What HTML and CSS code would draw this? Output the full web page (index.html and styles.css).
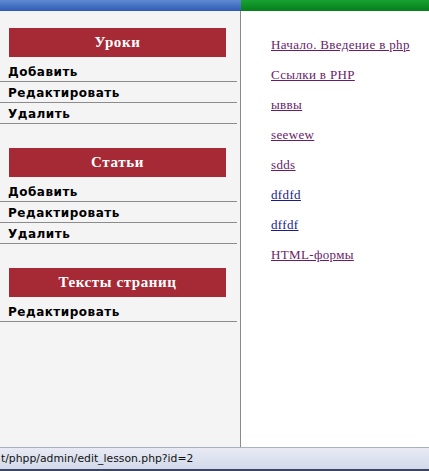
FILE: index.html
```html
<!DOCTYPE html>
<html>
<head>
<meta charset="utf-8">
<link rel="stylesheet" href="styles.css">
</head>
<body>
<div class="page">
  <div class="topbar">
    <div class="top-left"></div>
    <div class="top-right"></div>
  </div>
  <div class="main">
    <div class="sidebar">
      <div class="section">
        <div class="sec-title">Уроки</div>
        <a class="item" href="#">Добавить</a>
        <a class="item" href="#">Редактировать</a>
        <a class="item" href="#">Удалить</a>
      </div>
      <div class="section">
        <div class="sec-title">Статьи</div>
        <a class="item" href="#">Добавить</a>
        <a class="item" href="#">Редактировать</a>
        <a class="item" href="#">Удалить</a>
      </div>
      <div class="section">
        <div class="sec-title">Тексты страниц</div>
        <a class="item" href="#">Редактировать</a>
      </div>
    </div>
    <div class="content">
      <a class="link visited" href="#">Начало. Введение в php</a>
      <a class="link visited" href="#">Ссылки в PHP</a>
      <a class="link visited" href="#">ыввы</a>
      <a class="link visited" href="#">seewew</a>
      <a class="link visited" href="#">sdds</a>
      <a class="link fresh" href="#">dfdfd</a>
      <a class="link fresh" href="#">dffdf</a>
      <a class="link visited" href="#">HTML-формы</a>
    </div>
  </div>
  <div class="status">t/phpp/admin/edit_lesson.php?id=2</div>
  <div class="taskbar"></div>
</div>
</body>
</html>
```
FILE: styles.css
```css
html, body {
  margin: 0;
  padding: 0;
  background: #ffffff;
}
.page {
  width: 429px;
  height: 471px;
  display: flex;
  flex-direction: column;
  overflow: hidden;
}
.topbar {
  height: 11px;
  display: flex;
  flex: none;
}
.top-left {
  width: 241px;
  background: linear-gradient(#5f8ad2, #2f5cb4);
}
.top-right {
  flex: 1;
  background: linear-gradient(#19a232, #067e1c);
}
.main {
  flex: 1;
  display: flex;
  min-height: 0;
}
.sidebar {
  width: 241px;
  flex: none;
  background: #f4f4f4;
  border-right: 1px solid #8a8a8a;
  padding-top: 17px;
  box-sizing: border-box;
}
.section {
  display: flex;
  flex-direction: column;
  margin-bottom: 24px;
}
.sec-title {
  margin-left: 9px;
  width: 217px;
  height: 29px;
  background: #a52a36;
  color: #ffffff;
  font-family: "Liberation Serif", serif;
  font-weight: bold;
  font-size: 15px;
  letter-spacing: 0.6px;
  display: flex;
  align-items: center;
  justify-content: center;
  margin-bottom: 4px;
}
.item {
  width: 229px;
  height: 20px;
  border-bottom: 1px solid #8c8c8c;
  padding-left: 8px;
  color: #000000;
  text-decoration: none;
  font-family: "DejaVu Sans", sans-serif;
  font-weight: bold;
  font-size: 12px;
  letter-spacing: 0.5px;
  line-height: 22px;
}
.content {
  flex: 1;
  padding-top: 19px;
  padding-left: 30px;
  display: flex;
  flex-direction: column;
  align-items: flex-start;
}
.link {
  font-family: "Liberation Serif", serif;
  font-size: 13px;
  letter-spacing: 0.35px;
  line-height: 30px;
  height: 30px;
  text-decoration: underline;
}
.visited { color: #6a1b6a; }
.fresh { color: #1b1b8a; }
.status {
  height: 22px;
  flex: none;
  box-sizing: border-box;
  border-top: 1px solid #a8b0c4;
  background: linear-gradient(#e8ebf4, #d3d9ea);
  font-family: "DejaVu Sans", sans-serif;
  font-size: 10.8px;
  line-height: 21px;
  color: #111111;
  padding-left: 1px;
}
.taskbar {
  height: 2px;
  flex: none;
  background: #3a4560;
}
```
